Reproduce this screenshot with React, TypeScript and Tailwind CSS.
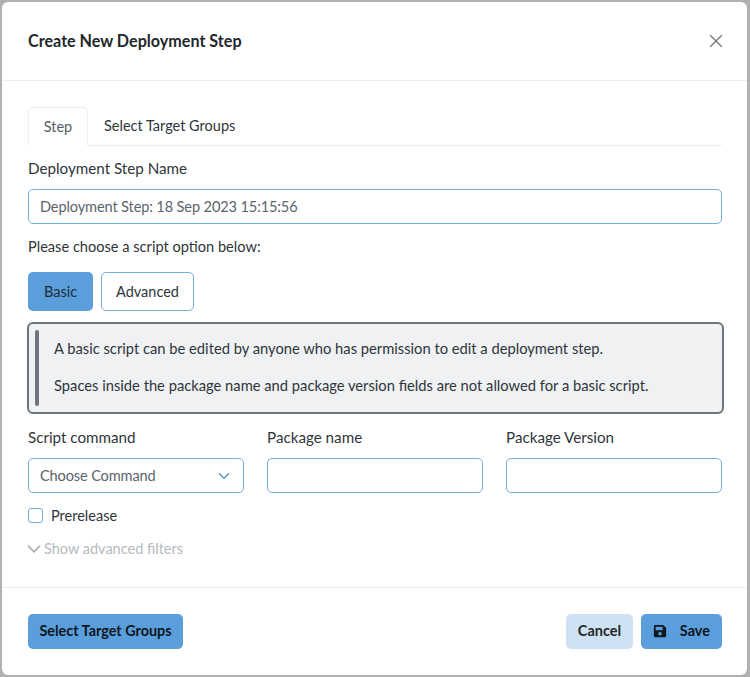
import React from 'react';
import { ChevronDown, X } from 'lucide-react';

const FONT = "font-['Lato','Noto_Sans',sans-serif]";

const SaveIcon = () => (
  <svg viewBox="0 0 448 512" className="w-[14px] h-[14px]" fill="currentColor">
    <path d="M433.9 129.9l-83.9-83.9A48 48 0 0 0 316.1 32H48C21.5 32 0 53.5 0 80v352c0 26.5 21.5 48 48 48h352c26.5 0 48-21.5 48-48V163.9a48 48 0 0 0-14.1-34zM224 416c-35.3 0-64-28.7-64-64 0-35.3 28.7-64 64-64s64 28.7 64 64c0 35.3-28.7 64-64 64zm96-304.5V212c0 6.6-5.4 12-12 12H76c-6.6 0-12-5.4-12-12V108c0-6.6 5.4-12 12-12h228.5c3.2 0 6.2 1.3 8.5 3.5l3.5 3.5c2.2 2.2 3.5 5.3 3.5 8.5z" />
  </svg>
);

const Field: React.FC<{ label: string; children?: React.ReactNode }> = ({ label, children }) => (
  <div className="flex-1 min-w-0">
    <div className="h-[20px] leading-[20px] text-[15.2px] text-[#2f353b] mb-[11px]">{label}</div>
    <div className="h-[35px] rounded-[5px] border border-[#74aee3] bg-white flex items-center justify-between pl-[11px] pr-[12px] text-[14.6px] tracking-[-0.15px] text-[#5c646b]">
      {children}
    </div>
  </div>
);

export default function App() {
  return (
    <div className={`w-[750px] h-[677px] bg-[#b1b1b1] p-[2px] overflow-hidden ${FONT}`}>
      <div className="w-[745px] h-[673px] bg-white rounded-[6px] flex flex-col">
        <div className="h-[79px] shrink-0 border-b border-[#eceef2] flex items-center justify-between pl-[26px] pr-[20px]">
          <h1 className="text-[16.15px] font-bold text-[#22272b]">Create New Deployment Step</h1>
          <X className="w-[22px] h-[22px] text-[#6f7479]" strokeWidth={1.4} />
        </div>

        <div className="flex-1 pl-[26px] pr-[25px] pt-[26px]">
          <div className="flex h-[39px] border-b border-[#eceef2] text-[14.5px]">
            <div className="w-[60px] h-[39px] flex items-center justify-center rounded-t-[5px] border border-b-white border-[#eceef2] text-[#555c63]">
              Step
            </div>
            <div className="pl-[16px] flex items-center text-[#2f353b]">Select Target Groups</div>
          </div>

          <div className="mt-[12px] h-[20px] leading-[20px] text-[15.2px] text-[#2f353b]">Deployment Step Name</div>
          <div className="mt-[11px] h-[35px] rounded-[5px] border border-[#74aee3] flex items-center pl-[11px] pr-[12px] text-[14.6px] tracking-[-0.135px] text-[#5c646b]">
            Deployment Step: 18 Sep 2023 15:15:56
          </div>

          <div className="mt-[13px] h-[20px] leading-[20px] text-[14.6px] text-[#2f353b]">Please choose a script option below:</div>

          <div className="mt-[15px] flex gap-[8px] text-[14.5px]">
            <div className="w-[65px] h-[39px] rounded-[5px] bg-[#5a9fdb] flex items-center justify-center text-[#1f2d3a]">Basic</div>
            <div className="w-[93px] h-[39px] rounded-[5px] border border-[#74aee3] flex items-center justify-center text-[#2f353b]">Advanced</div>
          </div>

          <div className="mt-[11px] -ml-[1px] -mr-[2px] h-[92px] rounded-[6px] border-2 border-[#6c757d] bg-[#f0f1f3] flex items-stretch p-[6px] text-[14.72px] text-[#2f353b]">
            <div className="w-[4px] rounded-[2px] bg-[#6c757d] shrink-0" />
            <div className="pl-[15px] pt-[8px] flex flex-col gap-[17px]">
              <p className="leading-[20px]">A basic script can be edited by anyone who has permission to edit a deployment step.</p>
              <p className="leading-[20px]">Spaces inside the package name and package version fields are not allowed for a basic script.</p>
            </div>
          </div>

          <div className="mt-[13px] flex gap-[23px]">
            <Field label="Script command">
              <span>Choose Command</span>
              <ChevronDown className="w-[18px] h-[18px] -mr-[2px] text-[#4f95d6]" strokeWidth={2} />
            </Field>
            <Field label="Package name" />
            <Field label="Package Version" />
          </div>

          <div className="mt-[12px] flex items-center gap-[8px] text-[14.5px] text-[#2f353b]">
            <div className="w-[15px] h-[15px] rounded-[3px] border border-[#74aee3] bg-white" />
            <span>Prerelease</span>
          </div>

          <div className="mt-[11px] flex items-center text-[14.5px] text-[#b4b9be]">
            <ChevronDown className="w-[22px] h-[22px] -ml-[5px] -mr-[1px]" strokeWidth={2} />
            <span>Show advanced filters</span>
          </div>
        </div>

        <div className="h-[88px] shrink-0 border-t border-[#eceef2] flex items-center justify-between pl-[26px] pr-[25px] pb-[1px]">
          <button className="w-[155px] h-[35px] rounded-[5px] bg-[#5a9fdb] text-[14.4px] font-bold text-[#10161c]">Select Target Groups</button>
          <div className="flex gap-[8px]">
            <button className="w-[67px] h-[35px] rounded-[5px] bg-[#cfe2f3] text-[14.5px] font-bold text-[#22272b]">Cancel</button>
            <button className="w-[81px] h-[35px] rounded-[5px] bg-[#5a9fdb] flex items-center justify-between pl-[12px] pr-[12px] text-[14.5px] font-bold text-[#10161c]">
              <SaveIcon />
              <span>Save</span>
            </button>
          </div>
        </div>
      </div>
    </div>
  );
}
